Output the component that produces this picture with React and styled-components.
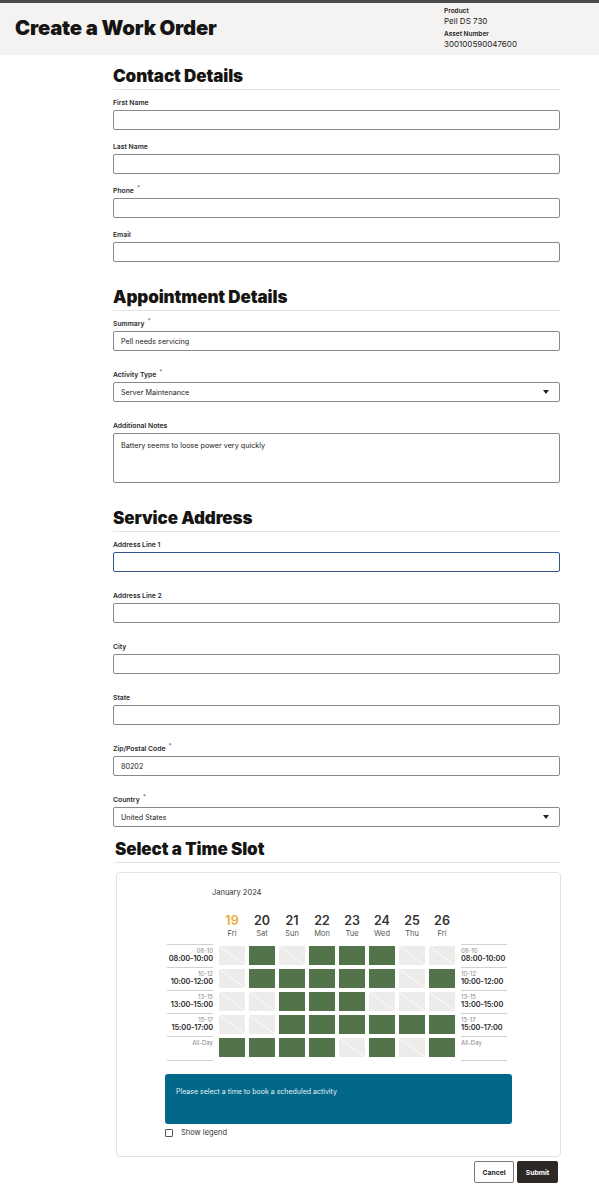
import styled, { createGlobalStyle } from "styled-components";

const GlobalStyle = createGlobalStyle`
  body {
    margin: 0;
    font-family: Inter, "Noto Sans", "Liberation Sans", sans-serif;
    color: #1a1a1a;
    background: #ffffff;
  }
  * { box-sizing: border-box; }
`;

const Header = styled.header`
  display: flex;
  justify-content: space-between;
  height: 55px;
  background: #f4f3f2;
  border-top: 3px solid #4a4a4a;
  padding: 0 0 0 15px;
`;

const Title = styled.h1`
  margin: 13px 0 0;
  font-size: 20.3px;
  line-height: 24px;
  font-weight: 900;
  color: #161513;
  letter-spacing: -0.2px;
`;

const AssetInfo = styled.div`
  width: 155px;
  padding-top: 4px;
  display: flex;
  flex-direction: column;
`;

const InfoLabel = styled.span`
  font-size: 6.5px;
  line-height: 9px;
  font-weight: 600;
  color: #222;
  margin-top: ${props => props.first ? "0" : "4px"};
`;

const InfoValue = styled.span`
  font-size: 8px;
  line-height: 10px;
  color: #222;
`;

const Main = styled.main`
  width: 447px;
  margin-left: 113px;
`;

const Section = styled.section`
  margin-top: ${props => props.top}px;
  margin-left: ${props => props.shift || 0}px;
  display: flex;
  flex-direction: column;
  gap: ${props => props.gap}px;
`;

const SectionTitle = styled.h2`
  margin: 0 0 ${props => 8 - props.gap}px;
  font-size: 17px;
  line-height: 22px;
  font-weight: 900;
  letter-spacing: -0.1px;
  color: #161513;
  padding-bottom: 2px;
  border-bottom: 1px solid #e4e4e4;
`;

const Field = styled.div`
  display: flex;
  flex-direction: column;
  gap: 2px;
`;

const Label = styled.label`
  font-size: 6.8px;
  line-height: 10px;
  font-weight: 600;
  color: #2a2a2a;
`;

const Req = styled.sup`
  color: #4d6d9a;
  font-size: 6px;
  margin-left: 3px;
  vertical-align: 3px;
  line-height: 0;
`;

const Input = styled.div`
  height: ${props => props.tall ? "50px" : "20px"};
  border: 1px solid ${props => props.focused ? "#31558a" : "#8a8a8a"};
  border-radius: 2px;
  padding: ${props => props.tall ? "7px" : "0"} 7px 0;
  display: flex;
  align-items: ${props => props.tall ? "flex-start" : "center"};
  justify-content: space-between;
  font-size: 7.2px;
  color: #222;
`;

const Caret = styled.span`
  width: 0;
  height: 0;
  margin-right: 3px;
  border-left: 3.5px solid transparent;
  border-right: 3.5px solid transparent;
  border-top: 4px solid #222;
`;

const Card = styled.div`
  margin-top: 9px;
  margin-left: 3px;
  width: 445px;
  border: 1px solid #e2e2e2;
  border-radius: 4px;
  padding: 15px 50px 19px;
`;

const Month = styled.div`
  margin-left: 45px;
  font-size: 7.5px;
  line-height: 10px;
  color: #333;
`;

const DaysRow = styled.div`
  display: flex;
  gap: 4px;
  margin: 16px 0 5px 52px;
`;

const Day = styled.div`
  width: 26px;
  display: flex;
  flex-direction: column;
  align-items: center;
`;

const DayNum = styled.span`
  font-size: 12.5px;
  line-height: 14px;
  font-weight: 600;
  color: ${props => props.today ? "#f0a93a" : "#333"};
`;

const DayName = styled.span`
  font-size: 7.5px;
  line-height: 11px;
  color: #555;
`;

const SlotRow = styled.div`
  display: flex;
  align-items: flex-start;
  height: ${props => props.last ? "25px" : "23px"};
`;

const TimeLabel = styled.div`
  flex: none;
  width: 46px;
  height: 100%;
  margin: ${props => props.right ? "0 0 0 6px" : "0 6px 0 0"};
  border-top: 1.5px solid #d2d2d2;
  border-bottom: ${props => props.last ? "1.5px solid #d2d2d2" : "none"};
  display: flex;
  flex-direction: column;
  align-items: ${props => props.right ? "flex-start" : "flex-end"};
  padding-top: 2px;
  white-space: nowrap;
`;

const TimeShort = styled.span`
  font-size: 6px;
  line-height: 7px;
  color: #888;
`;

const TimeLong = styled.span`
  font-size: 7.4px;
  line-height: 9px;
  font-weight: 600;
  letter-spacing: -0.1px;
  color: #2a2a2a;
`;

const Cells = styled.div`
  display: flex;
  gap: 4px;
  padding-top: 2px;
`;

const Cell = styled.div`
  width: 26px;
  height: 19px;
  background: ${props => props.open
    ? "#53734a"
    : "linear-gradient(to top right, #edecea calc(50% - 0.6px), #ffffff 50%, #edecea calc(50% + 0.6px))"};
`;

const Banner = styled.div`
  margin: 13px -2px 0;
  height: 50px;
  border-radius: 3px;
  background: #02688a;
  color: #e3f0f4;
  font-size: 7px;
  padding: 13px 11px;
`;

const LegendRow = styled.label`
  display: flex;
  align-items: center;
  gap: 8px;
  margin: 4px 0 0 -2px;
  font-size: 7.5px;
  color: #333;
`;

const Box = styled.span`
  width: 8px;
  height: 8px;
  border: 1px solid #555;
  border-radius: 1px;
`;

const Actions = styled.div`
  display: flex;
  justify-content: flex-end;
  gap: 3px;
  margin: 4px 2px 0 0;
`;

const Button = styled.button`
  height: 22px;
  width: ${props => props.primary ? "41px" : "40px"};
  border-radius: 2px;
  border: 1px solid ${props => props.primary ? "#2d2926" : "#7a7a7a"};
  background: ${props => props.primary ? "#2d2926" : "#ffffff"};
  color: ${props => props.primary ? "#ffffff" : "#222"};
  font-family: inherit;
  font-size: 6.8px;
  font-weight: 700;
  padding: 0;
`;

const days = [
  ["19", "Fri"], ["20", "Sat"], ["21", "Sun"], ["22", "Mon"],
  ["23", "Tue"], ["24", "Wed"], ["25", "Thu"], ["26", "Fri"],
];

const slots = [
  { short: "08-10", long: "08:00-10:00", open: [0, 1, 0, 1, 1, 1, 0, 0] },
  { short: "10-12", long: "10:00-12:00", open: [0, 1, 1, 1, 1, 1, 0, 1] },
  { short: "13-15", long: "13:00-15:00", open: [0, 0, 1, 1, 1, 0, 0, 0] },
  { short: "15-17", long: "15:00-17:00", open: [0, 0, 1, 1, 1, 1, 1, 1] },
  { short: "All-Day", long: "", open: [1, 1, 1, 1, 0, 1, 0, 1] },
];

function FormField({ label, required, value, focused, tall, select }) {
  return (
    <Field>
      <Label>{label}{required && <Req>*</Req>}</Label>
      <Input focused={focused} tall={tall}>
        <span>{value}</span>
        {select && <Caret />}
      </Input>
    </Field>
  );
}

export default function App() {
  return (
    <>
      <GlobalStyle />
      <Header>
        <Title>Create a Work Order</Title>
        <AssetInfo>
          <InfoLabel first>Product</InfoLabel>
          <InfoValue>Pell DS 730</InfoValue>
          <InfoLabel>Asset Number</InfoLabel>
          <InfoValue>300100590047600</InfoValue>
        </AssetInfo>
      </Header>
      <Main>
        <Section top={10} gap={12}>
          <SectionTitle gap={12}>Contact Details</SectionTitle>
          <FormField label="First Name" />
          <FormField label="Last Name" />
          <FormField label="Phone" required />
          <FormField label="Email" />
        </Section>

        <Section top={24} gap={19}>
          <SectionTitle gap={19}>Appointment Details</SectionTitle>
          <FormField label="Summary" required value="Pell needs servicing" />
          <FormField label="Activity Type" required value="Server Maintenance" select />
          <FormField label="Additional Notes" value="Battery seems to loose power very quickly" tall />
        </Section>

        <Section top={24} gap={19}>
          <SectionTitle gap={19}>Service Address</SectionTitle>
          <FormField label="Address Line 1" focused />
          <FormField label="Address Line 2" />
          <FormField label="City" />
          <FormField label="State" />
          <FormField label="Zip/Postal Code" required value="80202" />
          <FormField label="Country" required value="United States" select />
        </Section>

        <Section top={11} gap={0} shift={2}>
          <SectionTitle gap={8}>Select a Time Slot</SectionTitle>
        </Section>
        <Card>
          <Month>January 2024</Month>
          <DaysRow>
            {days.map(([num, name], i) => (
              <Day key={num}>
                <DayNum today={i === 0}>{num}</DayNum>
                <DayName>{name}</DayName>
              </Day>
            ))}
          </DaysRow>
          {slots.map((slot, r) => {
            const last = r === slots.length - 1;
            return (
              <SlotRow key={slot.short} last={last}>
                <TimeLabel last={last}>
                  <TimeShort>{slot.short}</TimeShort>
                  {slot.long && <TimeLong>{slot.long}</TimeLong>}
                </TimeLabel>
                <Cells>
                  {slot.open.map((o, c) => <Cell key={c} open={o === 1} />)}
                </Cells>
                <TimeLabel right last={last}>
                  <TimeShort>{slot.short}</TimeShort>
                  {slot.long && <TimeLong>{slot.long}</TimeLong>}
                </TimeLabel>
              </SlotRow>
            );
          })}
          <Banner>Please select a time to book a scheduled activity</Banner>
          <LegendRow>
            <Box />
            Show legend
          </LegendRow>
        </Card>
        <Actions>
          <Button>Cancel</Button>
          <Button primary>Submit</Button>
        </Actions>
      </Main>
    </>
  );
}
